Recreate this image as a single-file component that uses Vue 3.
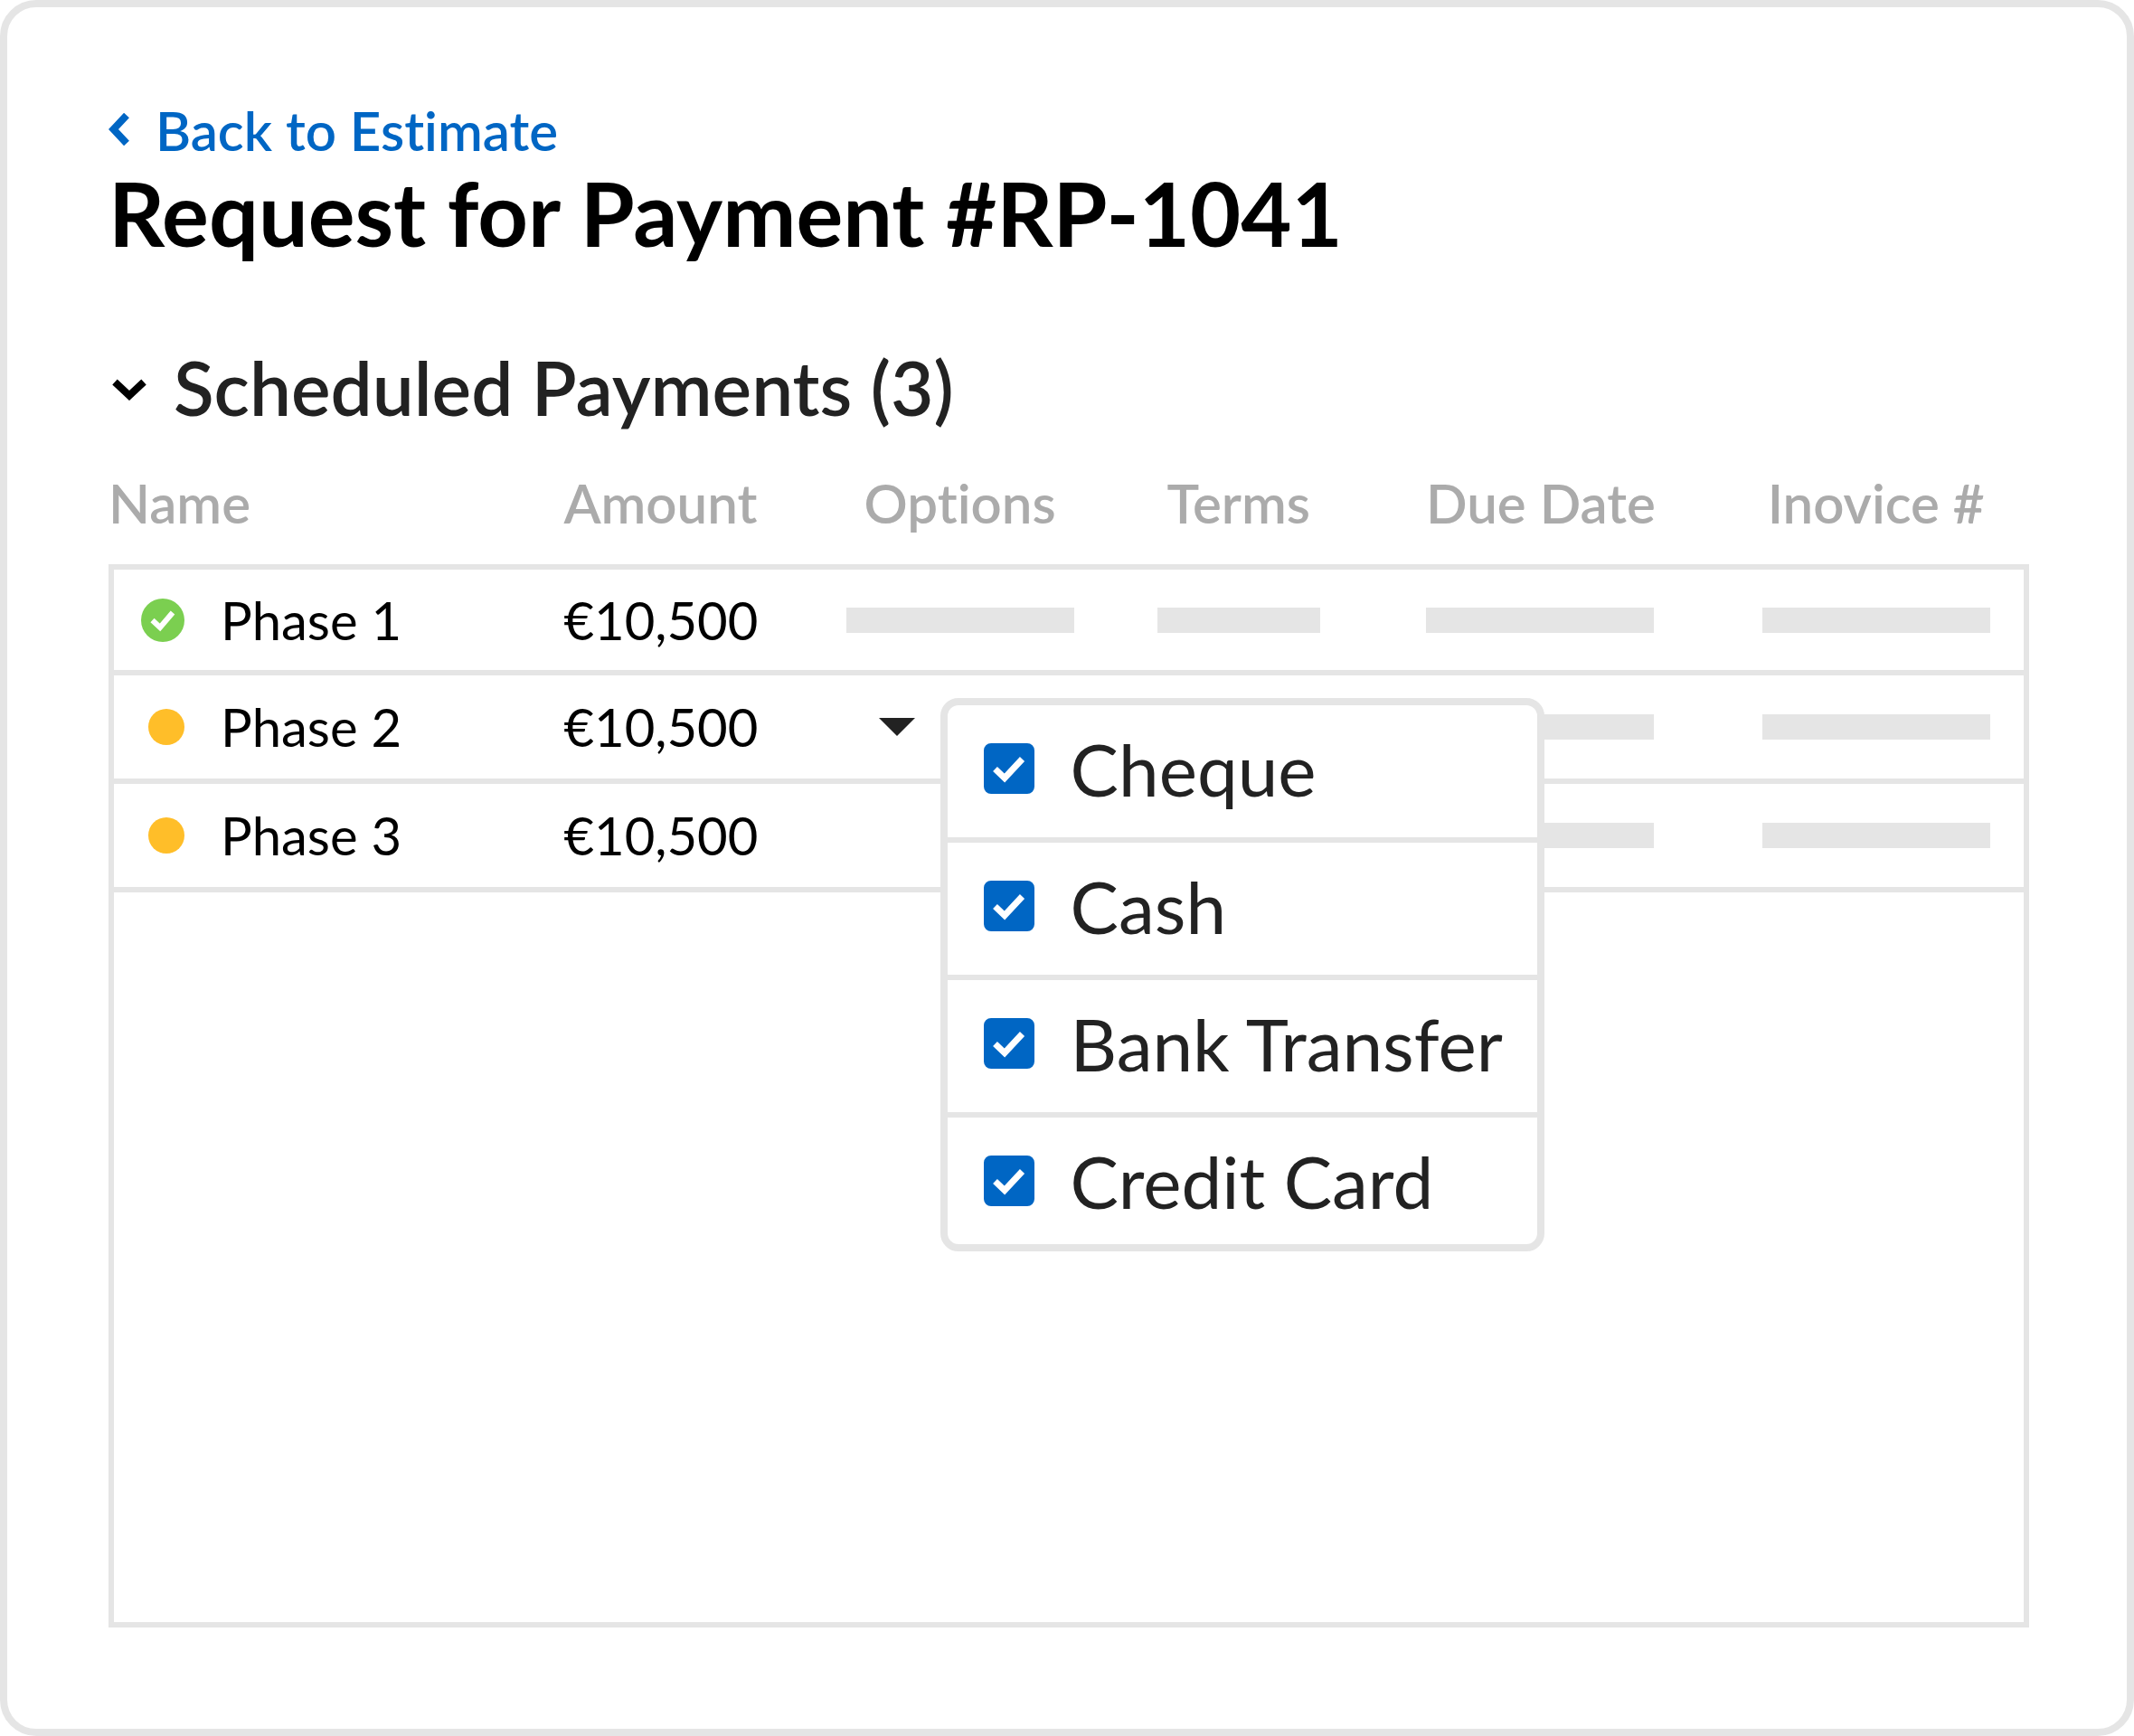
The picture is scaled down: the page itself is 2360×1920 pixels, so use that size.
<template>
  <main class="request-card">
    <a class="back-link" href="#">
      <svg class="back-icon" viewBox="0 0 24 38" aria-hidden="true">
        <path d="M20 2.500 5.500 18 20 33.500" />
      </svg>
      <span>Back to Estimate</span>
    </a>
    <h1>Request for Payment #RP-1041</h1>

    <h2>
      <button class="section-toggle" type="button" :aria-expanded="expanded" @click="expanded = !expanded">
        <svg class="toggle-icon" viewBox="0 0 38 30" aria-hidden="true">
          <path d="m3 9.500 16 15L35 9.500" />
        </svg>
        <span>Scheduled Payments ({{ payments.length }})</span>
      </button>
    </h2>

    <table class="payments" v-if="expanded">
      <thead>
        <tr>
          <th class="col-name">Name</th>
          <th class="col-amount">Amount</th>
          <th class="col-options"><span class="head-label">Options</span></th>
          <th class="col-terms"><span class="head-label short">Terms</span></th>
          <th class="col-due"><span class="head-label">Due Date</span></th>
          <th class="col-invoice"><span class="head-label">Inovice #</span></th>
        </tr>
      </thead>
      <tbody>
        <tr v-for="payment in payments" :key="payment.id">
          <td>
            <div class="name-cell">
              <span class="status">
                <svg v-if="payment.paid" class="status-paid" viewBox="0 0 48 48" aria-hidden="true">
                  <circle cx="24" cy="24" r="24" />
                  <path d="m12.500 24 8.500 8 14-16.500" />
                </svg>
                <span v-else class="status-pending"></span>
              </span>
              <span>{{ payment.name }}</span>
            </div>
          </td>
          <td>{{ payment.amount }}</td>
          <td class="options-cell">
            <div v-if="payment.paid" class="bar"></div>
            <button
              v-if="payment.id === activeId"
              class="options-btn"
              type="button"
              aria-label="Options"
              :aria-expanded="menuOpen"
              @click="menuOpen = !menuOpen"
            >
              <svg class="caret" viewBox="0 0 40 20" aria-hidden="true">
                <path d="M0 0h40L20 20z" />
              </svg>
            </button>
            <div v-if="payment.id === activeId && menuOpen" class="options-menu">
              <label v-for="method in methods" :key="method.name" class="option">
                <span class="checkbox">
                  <input type="checkbox" v-model="method.checked" />
                  <svg v-if="method.checked" viewBox="0 0 56 56" aria-hidden="true">
                    <path d="m12.500 28.500 10.500 10 19.500-21" />
                  </svg>
                </span>
                <span>{{ method.name }}</span>
              </label>
            </div>
          </td>
          <td><div class="bar short"></div></td>
          <td><div class="bar"></div></td>
          <td><div class="bar"></div></td>
        </tr>
      </tbody>
    </table>
    <div class="table-rest"></div>
  </main>
</template>

<script setup>
import { ref } from 'vue'

const expanded = ref(true)
const menuOpen = ref(true)
const activeId = ref(2)

const payments = ref([
  { id: 1, name: 'Phase 1', amount: '€10,500', paid: true },
  { id: 2, name: 'Phase 2', amount: '€10,500', paid: false },
  { id: 3, name: 'Phase 3', amount: '€10,500', paid: false }
])

const methods = ref([
  { name: 'Cheque', checked: true },
  { name: 'Cash', checked: true },
  { name: 'Bank Transfer', checked: true },
  { name: 'Credit Card', checked: true }
])
</script>

<style>
body { margin: 0; background: #fff; }
</style>

<style scoped>
.request-card { box-sizing: border-box; min-height: 100vh; display: flex; flex-direction: column; padding: 104px 108px 112px 112px; border: 8px solid #e5e5e5; border-radius: 40px; background: #fff; color: #000; font-family: Lato, "Open Sans", sans-serif; font-variant-ligatures: none; }
.back-link { display: flex; align-items: center; align-self: flex-start; gap: 28px; color: #0066c4; font-size: 60px; line-height: 64px; font-weight: 600; text-decoration: none; }
.back-icon { width: 24px; height: 38px; fill: none; stroke: currentColor; stroke-width: 8; }
h1 { margin: 4px 0 0; font-size: 97px; line-height: 112px; font-weight: 700; }
h2 { margin: 88px 0 0; font-size: 82px; line-height: 96px; font-weight: 600; }
.section-toggle { display: flex; align-items: center; gap: 30px; padding: 0 0 0 4px; border: none; background: none; color: #222; font: inherit; cursor: pointer; }
.toggle-icon { width: 38px; height: 30px; fill: none; stroke: #000; stroke-width: 8; }

.payments { width: 100%; margin-top: 48px; table-layout: fixed; border-collapse: separate; border-spacing: 0; font-size: 60px; line-height: 64px; }
.col-name { width: 23.7%; }
.col-amount { width: 14.7%; }
.col-options { width: 16.2%; }
.col-terms { width: 14%; }
.col-due { width: 17.5%; }
.payments th { padding: 0 0 36px; color: #ababab; font-weight: 600; text-align: left; white-space: nowrap; }
.head-label { display: block; width: 252px; text-align: center; }
.payments td { height: 114px; padding: 0; border-bottom: 6px solid #e5e5e5; font-size: 58px; white-space: nowrap; }
.payments tbody tr:first-child td { height: 111px; border-top: 6px solid #e5e5e5; }
.payments td:first-child { border-left: 6px solid #e5e5e5; }
.payments td:last-child { border-right: 6px solid #e5e5e5; }
.table-rest { flex: 1; border: 6px solid #e5e5e5; border-top: none; }

.name-cell { display: flex; align-items: center; gap: 40px; padding-left: 30px; }
.status { display: flex; justify-content: flex-end; width: 48px; }
.status-paid { width: 48px; height: 48px; fill: #7bcf50; }
.status-paid path { fill: none; stroke: #fff; stroke-width: 6; }
.status-pending { width: 40px; height: 40px; border-radius: 50%; background: #ffbe29; }
.bar { width: 252px; height: 28px; background: #e5e5e5; }
.short { width: 180px; }

.options-cell { position: relative; }
.options-btn { display: flex; margin-left: 36px; padding: 0; border: none; background: none; cursor: pointer; }
.caret { width: 40px; height: 20px; fill: #222; }
.options-menu { position: absolute; top: 25px; left: 104px; z-index: 1; min-width: 652px; border: 8px solid #e5e5e5; border-radius: 20px; background: #fff; }
.option { display: flex; align-items: center; gap: 40px; padding: 42px 28px 48px 40px; border-bottom: 6px solid #e5e5e5; color: #222; font-size: 80px; line-height: 56px; cursor: pointer; }
.option:last-child { padding-bottom: 42px; border-bottom: none; }
.checkbox { display: grid; width: 56px; height: 56px; }
.checkbox input { grid-area: 1 / 1; appearance: none; width: 56px; height: 56px; margin: 0; border: 2px solid #0066c4; border-radius: 8px; background: #fff; cursor: pointer; }
.checkbox input:checked { background: #0066c4; }
.checkbox svg { grid-area: 1 / 1; width: 56px; height: 56px; fill: none; stroke: #fff; stroke-width: 7; pointer-events: none; }
</style>
